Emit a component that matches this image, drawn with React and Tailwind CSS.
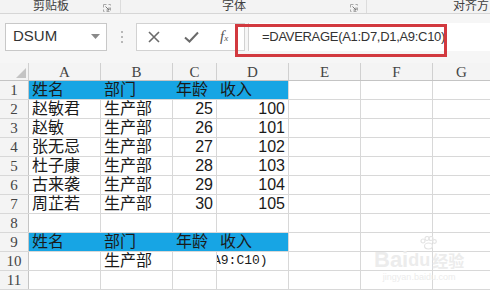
import React from "react";

const CYAN = "bg-[#17a5e4]";

const rows = [
  { n: 1, cells: ["姓名", "部门", "年龄", "收入"], head: true },
  { n: 2, cells: ["赵敏君", "生产部", "25", "100"] },
  { n: 3, cells: ["赵敏", "生产部", "26", "101"] },
  { n: 4, cells: ["张无忌", "生产部", "27", "102"] },
  { n: 5, cells: ["杜子康", "生产部", "28", "103"] },
  { n: 6, cells: ["古来袭", "生产部", "29", "104"] },
  { n: 7, cells: ["周芷若", "生产部", "30", "105"] },
  { n: 8, cells: ["", "", "", ""] },
  { n: 9, cells: ["姓名", "部门", "年龄", "收入"], head: true },
  { n: 10, cells: ["", "生产部", "", ""], formula: true },
  { n: 11, cells: ["", "", "", ""] },
];

const colW = ["w-[72px]", "w-[72px]", "w-[44px]", "w-[72px]"];

function Launcher() {
  return (
    <svg width="8" height="8" viewBox="0 0 8 8" className="mt-[4px]">
      <path d="M0.5 0.5H7.5V7.5H0.5Z" fill="none" stroke="#a8a8a8" strokeWidth="1" strokeDasharray="3 2" />
      <path d="M2.5 2.5L6 6M6 3.5V6H3.5" fill="none" stroke="#7a7a7a" strokeWidth="1" />
    </svg>
  );
}

export default function App() {
  return (
    <div className="relative w-[490px] h-[293px] overflow-hidden bg-white font-['Liberation_Sans','Noto_Sans_CJK_SC',sans-serif]">
      {/* ribbon group labels */}
      <div className="flex h-[14px] bg-[#f3f3f3] border-b border-[#d6d6d6] text-[12px] leading-[12px] text-[#404040] overflow-hidden">
        <div className="flex w-[121px] border-r border-[#dcdcdc]">
          <span className="ml-[33px]">剪贴板</span>
          <span className="ml-auto mr-[9px]"><Launcher /></span>
        </div>
        <div className="flex w-[246px] border-r border-[#dcdcdc]">
          <span className="ml-[101px]">字体</span>
          <span className="ml-auto mr-[8px]"><Launcher /></span>
        </div>
        <div className="flex flex-1">
          <span className="ml-[86px]">对齐方</span>
        </div>
      </div>

      {/* formula bar */}
      <div className="flex items-center h-[49px] bg-[#f6f6f6] pb-[4px]">
        <div className="ml-[5px] w-[102px] h-[28px] bg-white border border-[#c8c8c8] flex items-center pl-[7px] pr-[6px] text-[15px] text-[#333]">
          <span>DSUM</span>
          <svg width="9" height="5" viewBox="0 0 9 5" className="ml-auto">
            <path d="M0 0H9L4.5 5Z" fill="#8a8a8a" />
          </svg>
        </div>
        <div className="ml-[14px] flex flex-col gap-[3px]">
          <span className="w-[2px] h-[2px] bg-[#b8b8b8]" />
          <span className="w-[2px] h-[2px] bg-[#b8b8b8]" />
          <span className="w-[2px] h-[2px] bg-[#b8b8b8]" />
        </div>
        <div className="ml-[13px] w-[109px] h-[28px] bg-white border border-[#d2d2d2] flex items-center">
          <svg width="12" height="12" viewBox="0 0 12 12" className="ml-[11px]">
            <path d="M1 1L11 11M11 1L1 11" stroke="#6a6a6a" strokeWidth="1.6" />
          </svg>
          <svg width="15" height="12" viewBox="0 0 15 12" className="ml-[24px]">
            <path d="M1 6.5L5.5 10.5L14 1.5" fill="none" stroke="#6a6a6a" strokeWidth="2" />
          </svg>
          <span className="ml-[21px] font-['Liberation_Serif',serif] italic text-[15px] text-[#555]">
            f<span className="text-[9px]">x</span>
          </span>
        </div>
        <div className="ml-[3px] flex-1 h-[28px] bg-white border-l border-[#d2d2d2] flex items-center pl-[13px] text-[13px] tracking-[-0.3px] text-[#333] whitespace-nowrap">
          =DAVERAGE(A1:D7,D1,A9:C10)
        </div>
      </div>

      {/* highlight around formula */}
      <div className="absolute left-[235px] top-[24px] w-[212px] h-[33px] border-[3px] border-[#d2393f]" />

      {/* grid */}
      <div className="text-[#1a1a1a]">
        <div className="flex h-[18px] bg-[#f4f4f4] border-b border-[#c4c4c4] font-['Liberation_Serif',serif] text-[15px] leading-[18px] text-[#444]">
          <div className="w-[29px] border-r border-[#d0d0d0] flex items-end justify-end pr-[2px] pb-[2px]">
            <svg width="10" height="10" viewBox="0 0 10 10">
              <path d="M10 0V10H0Z" fill="#c4c4c4" />
            </svg>
          </div>
          {["A", "B", "C", "D", "E", "F"].map((c, i) => (
            <div key={c} className={`${i === 2 ? "w-[44px]" : "w-[72px]"} border-r border-[#d0d0d0] text-center`}>
              {c}
            </div>
          ))}
          <div className="flex-1 text-center">G</div>
        </div>

        {rows.map((r) => (
          <div key={r.n} className="flex h-[19px] border-b border-[#d8d8d8] leading-[18px]">
            <div className="w-[29px] bg-[#f4f4f4] border-r border-[#c4c4c4] font-['Liberation_Serif',serif] text-[15px] text-[#444] text-center">
              {r.n}
            </div>
            {r.cells.map((v, i) => {
              const num = /^\d+$/.test(v);
              return (
                <div
                  key={i}
                  className={`${colW[i]} border-r ${r.head ? `${CYAN} border-[#17a5e4]` : "border-[#d8d8d8]"} ${
                    r.head && i === 3 ? "border-[#d8d8d8]" : ""
                  } text-[16px] px-[3px] overflow-hidden whitespace-nowrap ${num ? "text-right text-[15px]" : ""}`}
                >
                  {r.formula && i === 3 ? (
                    <div className="-ml-[7px] font-['Liberation_Mono',monospace] text-[13px]">A9:C10)</div>
                  ) : (
                    v
                  )}
                </div>
              );
            })}
            <div className="w-[72px] border-r border-[#d8d8d8]" />
            <div className="w-[72px] border-r border-[#d8d8d8]" />
            <div className="flex-1" />
          </div>
        ))}
      </div>

      {/* watermark */}
      <div className="absolute left-[374px] top-[236px] flex flex-col items-center text-[#ececec] pointer-events-none">
        <svg width="18" height="14" viewBox="0 0 18 14" className="ml-[18px]">
          <g fill="none" stroke="#e4e4e4" strokeWidth="1.2">
            <circle cx="4" cy="5" r="2" />
            <circle cx="8" cy="2.5" r="2" />
            <circle cx="12" cy="2.5" r="2" />
            <circle cx="15.5" cy="5.5" r="1.8" />
            <ellipse cx="9.5" cy="10" rx="4" ry="3" />
          </g>
        </svg>
        <div className="flex items-end font-['Liberation_Sans',sans-serif] font-bold text-[22px] leading-[20px]">
          <span>Bai</span>
          <span className="text-[18px]">du</span>
          <span className="ml-[2px] text-[16px] font-['Noto_Sans_CJK_SC',sans-serif]">经验</span>
        </div>
        <div className="text-[9px] leading-[10px] mt-[2px]">jingyan.baidu.com</div>
      </div>
    </div>
  );
}
